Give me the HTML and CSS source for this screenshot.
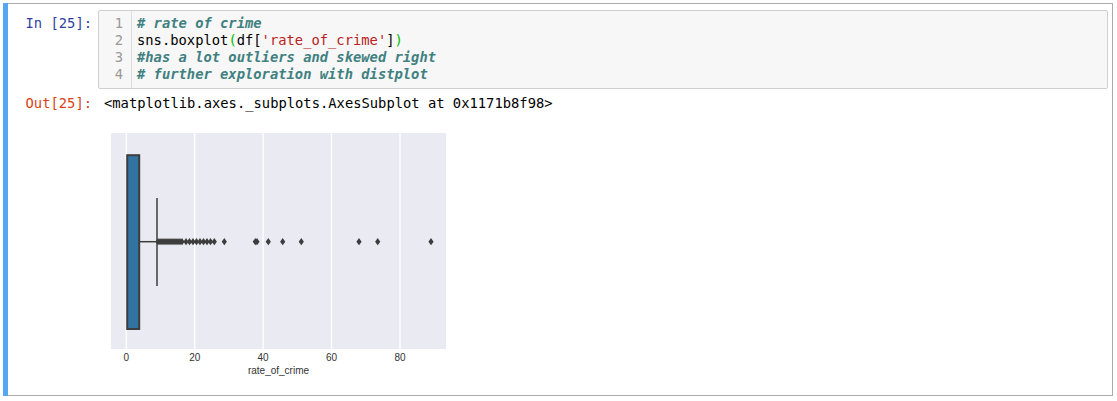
FILE: index.html
```html
<!DOCTYPE html>
<html>
<head>
<meta charset="utf-8">
<link rel="stylesheet" href="styles.css">
</head>
<body>
<div class="cell">
  <div class="input">
    <div class="prompt in-prompt">In&nbsp;[25]:</div>
    <div class="input-area">
      <div class="gutter">
        <div>1</div><div>2</div><div>3</div><div>4</div>
      </div>
      <div class="code">
        <div class="line"><span class="cm"># rate of crime</span></div>
        <div class="line">sns.boxplot<span class="br">(</span>df[<span class="str">'rate_of_crime'</span>]<span class="br">)</span></div>
        <div class="line"><span class="cm">#has a lot outliers and skewed right</span></div>
        <div class="line"><span class="cm"># further exploration with distplot</span></div>
      </div>
    </div>
  </div>
  <div class="output">
    <div class="out-row">
      <div class="prompt out-prompt">Out[25]:</div>
      <div class="out-text">&lt;matplotlib.axes._subplots.AxesSubplot at 0x1171b8f98&gt;</div>
    </div>
    <div class="out-row img-row">
      <div class="prompt"></div>
      <div class="out-img">
        <svg width="345" height="271" viewBox="0 0 345 271">
          <defs>
            <path id="dm" d="M0,-3.6 L2.6,0 L0,3.6 L-2.6,0 Z" fill="#3d3d3d"/>
          </defs>
          <g transform="translate(-104,-118)">
            <rect x="111" y="133" width="335" height="216" fill="#eaeaf2"/>
            <g stroke="#ffffff" stroke-width="1.3">
              <line x1="126.3" y1="133" x2="126.3" y2="349"/>
              <line x1="194.7" y1="133" x2="194.7" y2="349"/>
              <line x1="263.1" y1="133" x2="263.1" y2="349"/>
              <line x1="331.5" y1="133" x2="331.5" y2="349"/>
              <line x1="400" y1="133" x2="400" y2="349"/>
            </g>
            <line x1="111" y1="349.5" x2="446" y2="349.5" stroke="#ffffff" stroke-width="1"/>
            <rect x="127.2" y="155.2" width="12" height="173.8" fill="#3274a1" stroke="#3d3d3d" stroke-width="2"/>
            <g stroke="#3d3d3d" stroke-width="1.5">
              <line x1="140" y1="241.7" x2="157" y2="241.7"/>
              <line x1="157" y1="198" x2="157" y2="286"/>
            </g>
            <g>
              <use href="#dm" x="158" y="241.7"/>
              <use href="#dm" x="160" y="241.7"/>
              <use href="#dm" x="162" y="241.7"/>
              <use href="#dm" x="164" y="241.7"/>
              <use href="#dm" x="166" y="241.7"/>
              <use href="#dm" x="168" y="241.7"/>
              <use href="#dm" x="170" y="241.7"/>
              <use href="#dm" x="172" y="241.7"/>
              <use href="#dm" x="174" y="241.7"/>
              <use href="#dm" x="176" y="241.7"/>
              <use href="#dm" x="178" y="241.7"/>
              <use href="#dm" x="180" y="241.7"/>
              <use href="#dm" x="182" y="241.7"/>
              <use href="#dm" x="186" y="241.7"/>
              <use href="#dm" x="189.5" y="241.7"/>
              <use href="#dm" x="193" y="241.7"/>
              <use href="#dm" x="196.5" y="241.7"/>
              <use href="#dm" x="200" y="241.7"/>
              <use href="#dm" x="203.5" y="241.7"/>
              <use href="#dm" x="207" y="241.7"/>
              <use href="#dm" x="210.5" y="241.7"/>
              <use href="#dm" x="214.3" y="241.7"/>
              <use href="#dm" x="224.3" y="241.7"/>
              <use href="#dm" x="255.3" y="241.7"/>
              <use href="#dm" x="257" y="241.7"/>
              <use href="#dm" x="268.3" y="241.7"/>
              <use href="#dm" x="282.7" y="241.7"/>
              <use href="#dm" x="301.3" y="241.7"/>
              <use href="#dm" x="359" y="241.7"/>
              <use href="#dm" x="377.7" y="241.7"/>
              <use href="#dm" x="431" y="241.7"/>
            </g>
            <g class="ticks" text-anchor="middle">
              <text x="126.3" y="361.3">0</text>
              <text x="194.7" y="361.3">20</text>
              <text x="263.1" y="361.3">40</text>
              <text x="331.5" y="361.3">60</text>
              <text x="400" y="361.3">80</text>
              <text x="278.5" y="373.6">rate_of_crime</text>
            </g>
          </g>
        </svg>
      </div>
    </div>
  </div>
</div>
</body>
</html>
```

FILE: styles.css
```css
html, body {
  margin: 0;
  background: #ffffff;
}

body {
  padding: 3px 4px 0 3px;
  font-family: "DejaVu Sans Mono", "Liberation Mono", monospace;
  font-size: 13.8px;
  color: #000000;
}

.cell {
  position: relative;
  border: 1px solid #ababab;
  padding: 6px 4px 6px 5px;
}

.cell::before {
  content: "";
  position: absolute;
  left: -1px;
  top: -1px;
  bottom: -1px;
  width: 5px;
  background: #56a7f3;
}

.input,
.out-row {
  display: flex;
  align-items: flex-start;
}

.prompt {
  flex: 0 0 89px;
  box-sizing: border-box;
  padding-right: 6px;
  text-align: right;
  line-height: 17px;
  white-space: nowrap;
}

.in-prompt {
  padding-top: 5px;
  color: #303f9f;
}

.out-prompt {
  color: #d84315;
}

.input-area {
  flex: 1;
  display: flex;
  border: 1px solid #cfcfcf;
  border-radius: 2px;
  background: #f7f7f7;
  line-height: 17px;
}

.gutter {
  width: 33px;
  box-sizing: border-box;
  padding: 4px 8px 5px 0;
  border-right: 1px solid #dddddd;
  text-align: right;
  color: #999999;
}

.code {
  flex: 1;
  padding: 4px 5px 5px 5px;
}

.line {
  height: 17px;
  white-space: pre;
}

.cm {
  color: #408080;
  font-style: italic;
  font-weight: bold;
}

.str {
  color: #ba2121;
}

.br {
  color: #00bb00;
}

.output {
  margin-top: 6px;
}

.out-text {
  padding-left: 6px;
  line-height: 17px;
  white-space: pre;
}

.img-row {
  margin-top: 6px;
}

.out-img {
  padding-left: 6px;
  line-height: 0;
}

.out-img svg {
  display: block;
}

.ticks text {
  font-family: "Liberation Sans", Arial, sans-serif;
  font-size: 10px;
  fill: #333333;
}
```
